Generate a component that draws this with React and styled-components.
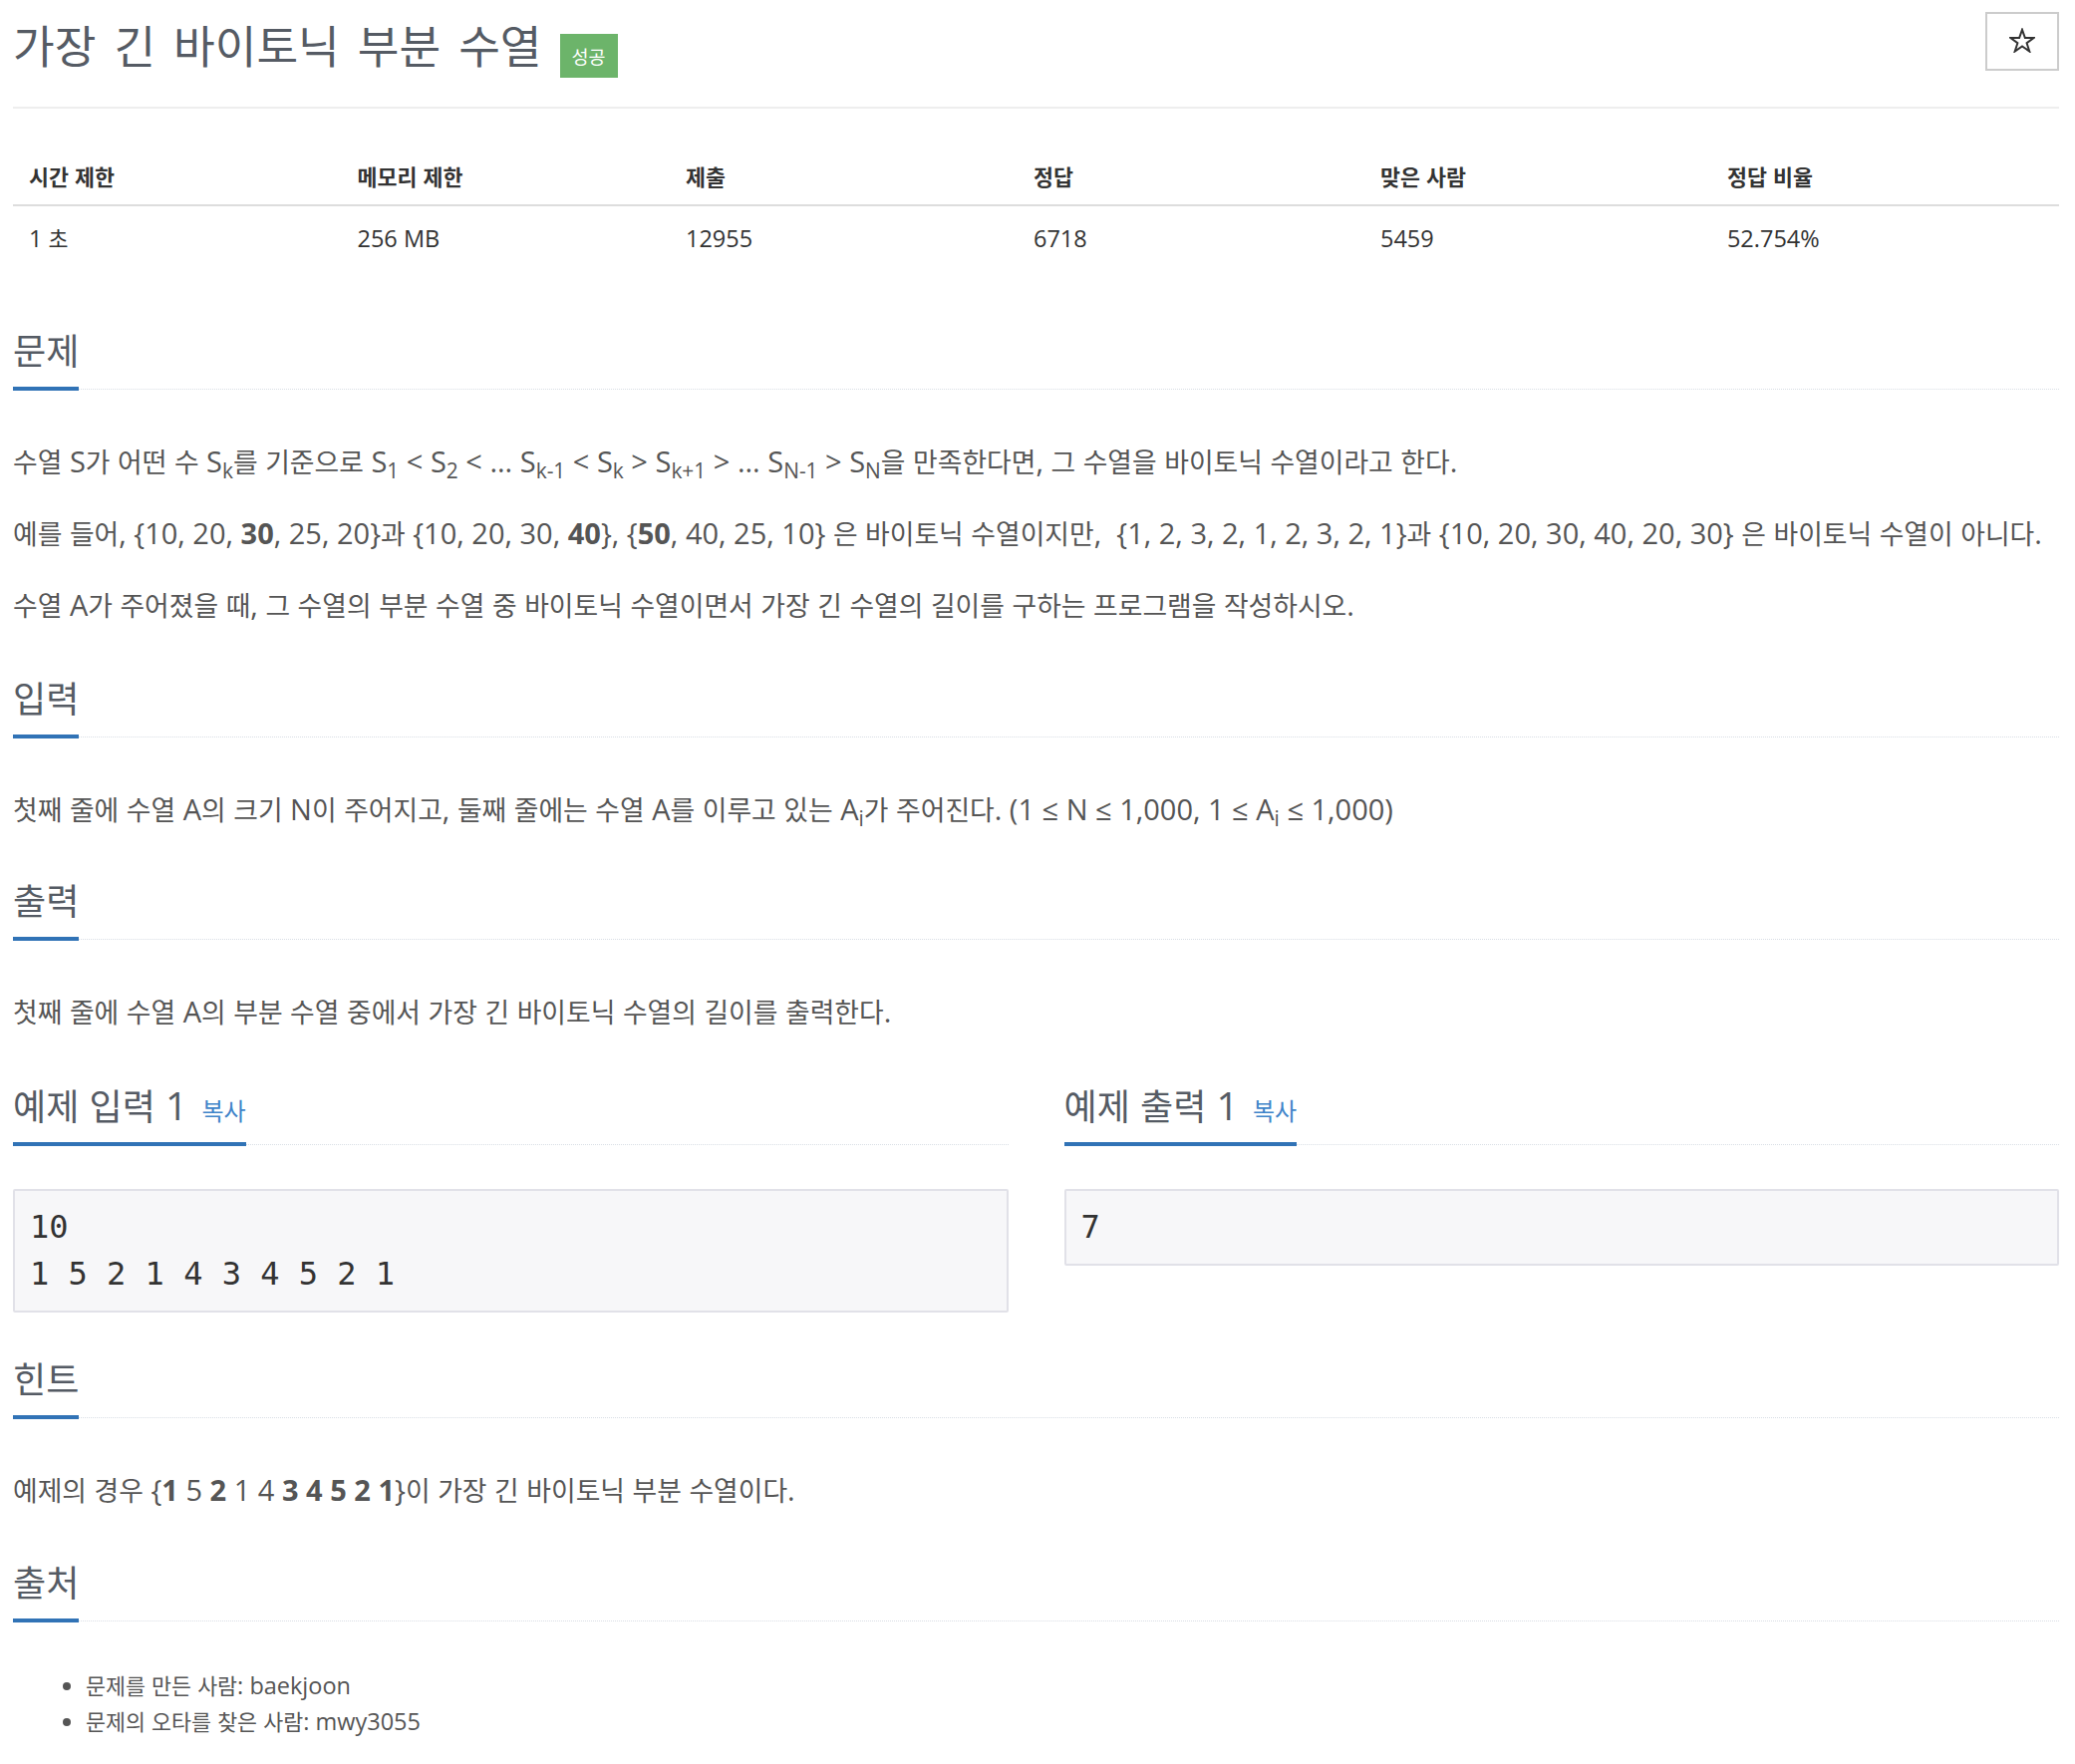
import React from 'react';
import styled, { createGlobalStyle } from 'styled-components';

const GlobalStyle = createGlobalStyle`
  html, body {
    margin: 0;
    padding: 0;
    background: #fff;
  }

  body {
    font-family: "Open Sans", "Noto Sans CJK KR", sans-serif;
    color: #555;
  }
`;

// hangul runs get their own face, sized so line widths match the latin text
const HANGUL = /([\u1100-\u11FF\u3130-\u318F\uAC00-\uD7AF]+)/;

const Hg = styled.span`
  font-family: "Noto Sans CJK KR", sans-serif;
  font-size: 0.925em;
`;

function ko(node) {
  if (typeof node === 'string') {
    return node.split(HANGUL).map((part, i) => (i % 2 ? <Hg key={i}>{part}</Hg> : part));
  }
  if (Array.isArray(node)) return node.map(ko);
  if (React.isValidElement(node) && node.props.children != null) {
    return React.cloneElement(node, undefined, ...[].concat(ko(node.props.children)));
  }
  return node;
}

const Ko = ({ children }) => <>{React.Children.map(children, ko)}</>;

const stats = [
  { label: '시간 제한', value: '1 초', width: '16.05%' },
  { label: '메모리 제한', value: '256 MB', width: '16.05%' },
  { label: '제출', value: '12955', width: '17%' },
  { label: '정답', value: '6718', width: '16.95%' },
  { label: '맞은 사람', value: '5459', width: '16.95%' },
  { label: '정답 비율', value: '52.754%', width: '17%' },
];

function Heading({ children }) {
  return (
    <Headline>
      <H2>
        <Ko>{children}</Ko>
      </H2>
    </Headline>
  );
}

function StarIcon() {
  return (
    <svg width="26" height="25" viewBox="0 0 26 25" fill="none">
      <path
        d="M13 1.8L15.9 10H24.6L17.6 15.2L20.3 23.5L13 18.4L5.7 23.5L8.4 15.2L1.4 10H10.1Z"
        stroke="#333"
        strokeWidth="2"
        strokeLinejoin="miter"
      />
    </svg>
  );
}

function App() {
  return (
    <Page>
      <GlobalStyle />
      <Header>
        <Title>
          <Ko>가장 긴 바이토닉 부분 수열</Ko>
          <Badge>
            <Ko>성공</Ko>
          </Badge>
        </Title>
        <StarButton type="button" aria-label="star">
          <StarIcon />
        </StarButton>
      </Header>

      <Table>
        <colgroup>
          {stats.map(s => (
            <col key={s.label} width={s.width} />
          ))}
        </colgroup>
        <thead>
          <tr>
            {stats.map(s => (
              <Th key={s.label}>
                <Ko>{s.label}</Ko>
              </Th>
            ))}
          </tr>
        </thead>
        <tbody>
          <tr>
            {stats.map(s => (
              <Td key={s.label}>
                <Ko>{s.value}</Ko>
              </Td>
            ))}
          </tr>
        </tbody>
      </Table>

      <Section $gap={57}>
        <Heading>문제</Heading>
        <Body>
          <P>
            <Ko>
              수열 S가 어떤 수 S<Sub>k</Sub>를 기준으로 S<Sub>1</Sub> &lt; S<Sub>2</Sub> &lt; ... S
              <Sub>k-1</Sub> &lt; S<Sub>k</Sub> &gt; S<Sub>k+1</Sub> &gt; ... S<Sub>N-1</Sub> &gt; S
              <Sub>N</Sub>을 만족한다면, 그 수열을 바이토닉 수열이라고 한다.
            </Ko>
          </P>
          <P>
            <Ko>
              예를 들어, {'{'}10, 20, <B>30</B>, 25, 20{'}'}과 {'{'}10, 20, 30, <B>40</B>{'}'}, {'{'}
              <B>50</B>, 40, 25, 10{'}'} 은 바이토닉 수열이지만,{'\u00a0'} {'{'}1, 2, 3, 2, 1, 2, 3, 2, 1
              {'}'}과 {'{'}10, 20, 30, 40, 20, 30{'}'} 은 바이토닉 수열이 아니다.
            </Ko>
          </P>
          <P>
            <Ko>수열 A가 주어졌을 때, 그 수열의 부분 수열 중 바이토닉 수열이면서 가장 긴 수열의 길이를 구하는 프로그램을 작성하시오.</Ko>
          </P>
        </Body>
      </Section>

      <Section $gap={18}>
        <Heading>입력</Heading>
        <Body>
          <P>
            <Ko>
              첫째 줄에 수열 A의 크기 N이 주어지고, 둘째 줄에는 수열 A를 이루고 있는 A<Sub>i</Sub>가
              주어진다. (1 ≤ N ≤ 1,000, 1 ≤ A<Sub>i</Sub> ≤ 1,000)
            </Ko>
          </P>
        </Body>
      </Section>

      <Section $gap={16}>
        <Heading>출력</Heading>
        <Body>
          <P>
            <Ko>첫째 줄에 수열 A의 부분 수열 중에서 가장 긴 바이토닉 수열의 길이를 출력한다.</Ko>
          </P>
        </Body>
      </Section>

      <Section $gap={19}>
        <Samples>
          <div>
            <Heading>
              예제 입력 1 <Copy>복사</Copy>
            </Heading>
            <Pre>{'10\n1 5 2 1 4 3 4 5 2 1'}</Pre>
          </div>
          <div>
            <Heading>
              예제 출력 1 <Copy>복사</Copy>
            </Heading>
            <Pre>7</Pre>
          </div>
        </Samples>
      </Section>

      <Section $gap={41}>
        <Heading>힌트</Heading>
        <Body>
          <P>
            <Ko>
              예제의 경우 {'{'}
              <B>1</B> 5 <B>2</B> 1 4 <B>3</B> <B>4</B> <B>5</B> <B>2</B> <B>1</B>
              {'}'}이 가장 긴 바이토닉 부분 수열이다.
            </Ko>
          </P>
        </Body>
      </Section>

      <Section $gap={17}>
        <Heading>출처</Heading>
        <SourceList>
          <li>
            <Ko>문제를 만든 사람: baekjoon</Ko>
          </li>
          <li>
            <Ko>문제의 오타를 찾은 사람: mwy3055</Ko>
          </li>
        </SourceList>
      </Section>
    </Page>
  );
}

// Styled components
const Page = styled.div`
  display: flex;
  flex-direction: column;
  padding: 0 16px 30px 13px;
`;

const Header = styled.div`
  display: flex;
  justify-content: space-between;
  align-items: flex-start;
  padding: 10px 0 29px;
  border-bottom: 2px solid #eee;
`;

const Title = styled.h1`
  margin: 0;
  display: flex;
  align-items: center;
  gap: 18px;
  font-size: 49px;
  line-height: 64px;
  font-weight: 400;
  color: #555b64;
`;

const Badge = styled.span`
  display: inline-flex;
  align-items: center;
  justify-content: center;
  box-sizing: border-box;
  width: 58px;
  height: 44px;
  margin-top: 24px;
  background: #6cb46a;
  color: #fff;
  font-size: 20px;
  line-height: 1;
`;

const StarButton = styled.button`
  display: flex;
  align-items: center;
  justify-content: center;
  box-sizing: border-box;
  width: 74px;
  height: 59px;
  margin-top: 2px;
  padding: 0 0 3px;
  border: 2px solid #ccc;
  background: #fff;
`;

const Table = styled.table`
  width: 100%;
  margin-top: 41px;
  border-collapse: collapse;
  table-layout: fixed;
  font-size: 23.5px;
  color: #333;
`;

const Th = styled.th`
  text-align: left;
  font-weight: 700;
  padding: 11px 16px 12px;
  line-height: 32px;
  border-bottom: 2px solid #ddd;
`;

const Td = styled.td`
  padding: 13px 16px 11px;
  line-height: 38px;
`;

const Section = styled.section`
  margin-top: ${p => p.$gap}px;
`;

const Headline = styled.div`
  display: flex;
  border-bottom: 1px dotted #d9dee5;
`;

const H2 = styled.h2`
  margin: 0 0 -2px;
  padding-bottom: 13px;
  border-bottom: 4px solid #3173b6;
  font-size: 39px;
  line-height: 48px;
  font-weight: 400;
  color: #555b64;
  white-space: nowrap;
`;

const Copy = styled.span`
  margin-left: 4px;
  font-size: 26px;
  line-height: 1;
  color: #3f84c9;
`;

const Body = styled.div`
  margin-top: 50px;
`;

const P = styled.p`
  margin: 0 0 28px;
  font-size: 29px;
  line-height: 44px;
  color: #555;
`;

const Sub = styled.sub`
  font-size: 72%;
  line-height: 0;
  vertical-align: -0.3em;
`;

const B = styled.b`
  font-weight: 700;
`;

const Samples = styled.div`
  display: grid;
  grid-template-columns: 1fr 1fr;
  column-gap: 56px;
  align-items: start;
`;

const Pre = styled.pre`
  margin: 44px 0 0;
  padding: 13px 15px;
  border: 2px solid #e1e1e8;
  border-radius: 2px;
  background: #f7f7f9;
  font-family: "DejaVu Sans Mono", monospace;
  font-size: 32px;
  line-height: 47px;
  color: #333;
`;

const SourceList = styled.ul`
  margin: 46px 0 0;
  padding-left: 73px;
  font-size: 23.5px;
  line-height: 35px;
  color: #555;
`;

export default App;
